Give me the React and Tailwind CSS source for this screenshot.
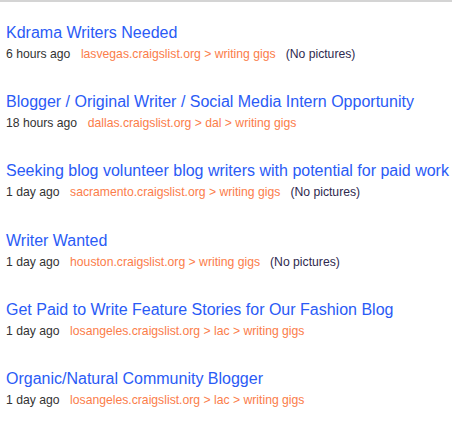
import React from "react";

const posts = [
  { title: "Kdrama Writers Needed", time: "6 hours ago", where: "lasvegas.craigslist.org > writing gigs", pics: true },
  { title: "Blogger / Original Writer / Social Media Intern Opportunity", time: "18 hours ago", where: "dallas.craigslist.org > dal > writing gigs", pics: false },
  { title: "Seeking blog volunteer blog writers with potential for paid work", time: "1 day ago", where: "sacramento.craigslist.org > writing gigs", pics: true },
  { title: "Writer Wanted", time: "1 day ago", where: "houston.craigslist.org > writing gigs", pics: true },
  { title: "Get Paid to Write Feature Stories for Our Fashion Blog", time: "1 day ago", where: "losangeles.craigslist.org > lac > writing gigs", pics: false },
  { title: "Organic/Natural Community Blogger", time: "1 day ago", where: "losangeles.craigslist.org > lac > writing gigs", pics: false },
];

export default function App() {
  return (
    <div className="w-[454px] h-[424px] bg-white overflow-hidden font-['Liberation_Sans',Arial,sans-serif]">
      <div className="mr-[2px] border-t-2 border-[#d4d4d4]" />
      <ul className="flex flex-col gap-[30.2px] pt-[21px] pl-[6px]">
        {posts.map((p, i) => (
          <li key={i} className="flex flex-col">
            <a href="#" className="text-[16px] leading-[20px] text-[#2a5bf6] whitespace-nowrap mb-[3px]">
              {p.title}
            </a>
            <div className="flex items-center text-[12.2px] leading-[16px] whitespace-nowrap">
              <span className="text-[#333333]">{p.time}</span>
              <span className="ml-[10.5px] text-[#fb7d4a]">{p.where}</span>
              {p.pics && <span className="ml-[10px] text-[#2f2a4f]">(No pictures)</span>}
            </div>
          </li>
        ))}
      </ul>
    </div>
  );
}
